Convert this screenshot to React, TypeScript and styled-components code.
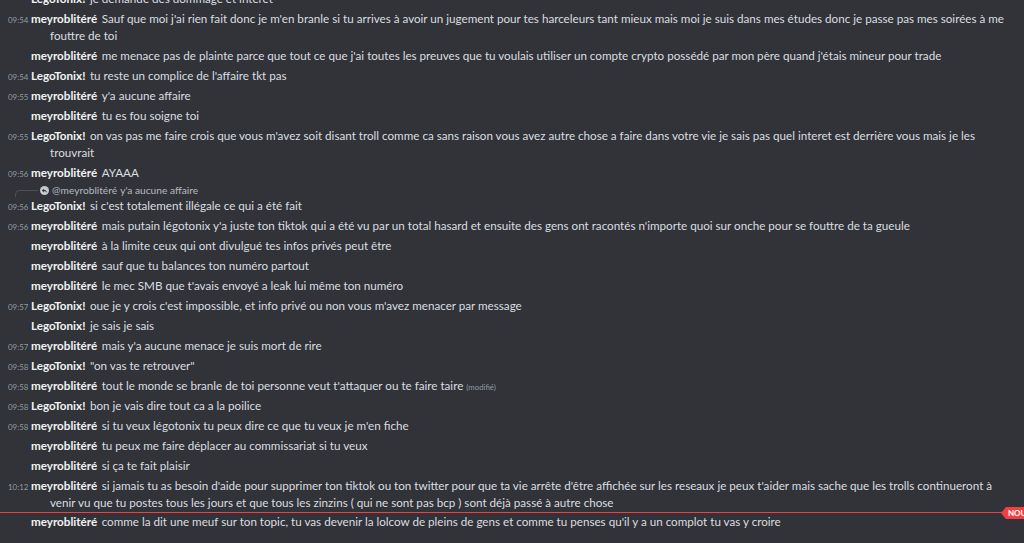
import React from 'react'
import styled, { createGlobalStyle } from 'styled-components'

const GlobalStyle = createGlobalStyle`
  html, body {
    margin: 0;
    padding: 0;
    overflow: hidden;
    background: #313338;
  }
  #root {
    height: 100vh;
  }
`

type Msg = {
  time?: string
  user: string
  text: string
  edited?: boolean
  reply?: { user: string; text: string }
  newAfter?: boolean
}

const messages: Msg[] = [
  { user: 'LegoTonix!', text: 'je demande des dommage et interet' },
  { time: '09:54', user: 'meyroblitéré', text: "Sauf que moi j'ai rien fait donc je m'en branle si tu arrives à avoir un jugement pour tes harceleurs tant mieux mais moi je suis dans mes études donc je passe pas mes soirées à me fouttre de toi" },
  { user: 'meyroblitéré', text: "me menace pas de plainte parce que tout ce que j'ai toutes les preuves que tu voulais utiliser un compte crypto possédé par mon père quand j'étais mineur pour trade" },
  { time: '09:54', user: 'LegoTonix!', text: "tu reste un complice de l'affaire tkt pas" },
  { time: '09:55', user: 'meyroblitéré', text: "y'a aucune affaire" },
  { user: 'meyroblitéré', text: 'tu es fou soigne toi' },
  { time: '09:55', user: 'LegoTonix!', text: "on vas pas me faire crois que vous m'avez soit disant troll comme ca sans raison vous avez autre chose a faire dans votre vie je sais pas quel interet est derrière vous mais je les trouvrait" },
  { time: '09:56', user: 'meyroblitéré', text: 'AYAAA' },
  { time: '09:56', user: 'LegoTonix!', text: "si c'est totalement illégale ce qui a été fait", reply: { user: '@meyroblitéré', text: "y'a aucune affaire" } },
  { time: '09:56', user: 'meyroblitéré', text: "mais putain légotonix y'a juste ton tiktok qui a été vu par un total hasard et ensuite des gens ont racontés n'importe quoi sur onche pour se fouttre de ta gueule" },
  { user: 'meyroblitéré', text: 'à la limite ceux qui ont divulgué tes infos privés peut être' },
  { user: 'meyroblitéré', text: 'sauf que tu balances ton numéro partout' },
  { user: 'meyroblitéré', text: "le mec SMB que t'avais envoyé a leak lui même ton numéro" },
  { time: '09:57', user: 'LegoTonix!', text: "oue je y crois c'est impossible, et info privé ou non vous m'avez menacer par message" },
  { user: 'LegoTonix!', text: 'je sais je sais' },
  { time: '09:57', user: 'meyroblitéré', text: "mais y'a aucune menace je suis mort de rire" },
  { time: '09:58', user: 'LegoTonix!', text: '"on vas te retrouver"' },
  { time: '09:58', user: 'meyroblitéré', text: "tout le monde se branle de toi personne veut t'attaquer ou te faire taire", edited: true },
  { time: '09:58', user: 'LegoTonix!', text: 'bon je vais dire tout ca a la poilice' },
  { time: '09:58', user: 'meyroblitéré', text: "si tu veux légotonix tu peux dire ce que tu veux je m'en fiche" },
  { user: 'meyroblitéré', text: 'tu peux me faire déplacer au commissariat si tu veux' },
  { user: 'meyroblitéré', text: 'si ça te fait plaisir' },
  { time: '10:12', user: 'meyroblitéré', text: "si jamais tu as besoin d'aide pour supprimer ton tiktok ou ton twitter pour que ta vie arrête d'être affichée sur les reseaux je peux t'aider mais sache que les trolls continueront à venir vu que tu postes tous les jours et que tous les zinzins ( qui ne sont pas bcp ) sont déjà passé à autre chose", newAfter: true },
  { user: 'meyroblitéré', text: "comme la dit une meuf sur ton topic, tu vas devenir la lolcow de pleins de gens et comme tu penses qu'il y a un complot tu vas y croire" },
]

const Chat = () => {
  return (
    <Scroller>
      <List>
        {messages.map((m, i) => (
          <React.Fragment key={i}>
            <Message>
              {m.reply && (
                <Reply>
                  <Spine />
                  <ReplyIcon>
                    <svg width="9" height="9" viewBox="0 0 24 24">
                      <circle cx="12" cy="12" r="12" fill="#c4c9ce" />
                      <path d="M10 7 L5 12 L10 17 V14 C14 14 16.5 15 18.5 18 C18 13.5 15.5 10.5 10 10 Z" fill="#313338" />
                    </svg>
                  </ReplyIcon>
                  <ReplyUser>{m.reply.user}</ReplyUser>
                  <ReplyText>{m.reply.text}</ReplyText>
                </Reply>
              )}
              <Content>
                <Time $hidden={!m.time}>{m.time || '00:00'}</Time>
                <Username>{m.user}</Username>
                {m.text}
                {m.edited && <Edited>(modifié)</Edited>}
              </Content>
            </Message>
            {m.newAfter && (
              <Divider>
                <Line />
                <Badge>NOUVEAU</Badge>
              </Divider>
            )}
          </React.Fragment>
        ))}
      </List>
    </Scroller>
  )
}

const App = () => (
  <>
    <GlobalStyle />
    <Chat />
  </>
)

const Scroller = styled.div`
  height: 543px;
  overflow: hidden;
  display: flex;
  flex-direction: column;
  justify-content: flex-end;
  background: #313338;
  font-family: Lato, "Liberation Sans", sans-serif;
`

const List = styled.div`
  display: flex;
  flex-direction: column;
  padding-bottom: 12px;
`

const Message = styled.div`
  padding: 1.5px 10px 1.5px 50px;
  color: #dbdee1;
  font-size: 11.65px;
  line-height: 17px;
`

const Content = styled.div`
  text-indent: -42px;
  word-wrap: break-word;
`

const Time = styled.span<{ $hidden: boolean }>`
  display: inline-block;
  width: 20px;
  margin-right: 3px;
  text-indent: 0;
  white-space: nowrap;
  font-size: 7.9px;
  line-height: 10px;
  color: #949ba4;
  visibility: ${p => (p.$hidden ? 'hidden' : 'visible')};
`

const Username = styled.span`
  font-weight: 700;
  color: #f2f3f5;
  margin-right: 4.5px;
`

const Edited = styled.span`
  font-size: 7.8px;
  line-height: 10px;
  color: #949ba4;
  margin-left: 3px;
`

const Reply = styled.div`
  position: relative;
  display: flex;
  align-items: center;
  gap: 3px;
  height: 13px;
  margin-left: -10px;
  font-size: 10.2px;
  line-height: 13px;
  white-space: nowrap;
`

const Spine = styled.div`
  position: absolute;
  left: -25px;
  top: 6px;
  width: 22px;
  height: 6px;
  border-left: 1.5px solid #4e5058;
  border-top: 1.5px solid #4e5058;
  border-top-left-radius: 5px;
`

const ReplyIcon = styled.span`
  display: flex;
  align-items: center;
`

const ReplyUser = styled.span`
  color: #b5bac1;
`

const ReplyText = styled.span`
  color: #b5bac1;
`

const Divider = styled.div`
  display: flex;
  align-items: center;
  height: 1px;
  margin: 0 -27px -2px 0;
`

const Line = styled.div`
  flex: 1;
  height: 1px;
  background: #f23f43;
`

const Badge = styled.span`
  position: relative;
  background: #f23f43;
  color: #fff;
  font-size: 8px;
  font-weight: 700;
  line-height: 12px;
  height: 12px;
  padding: 0 3px 0 2px;
  border-radius: 0 2px 2px 0;
  &::before {
    content: '';
    position: absolute;
    left: -5px;
    top: 0;
    border-style: solid;
    border-width: 6px 5px 6px 0;
    border-color: transparent #f23f43 transparent transparent;
  }
`

export default App
